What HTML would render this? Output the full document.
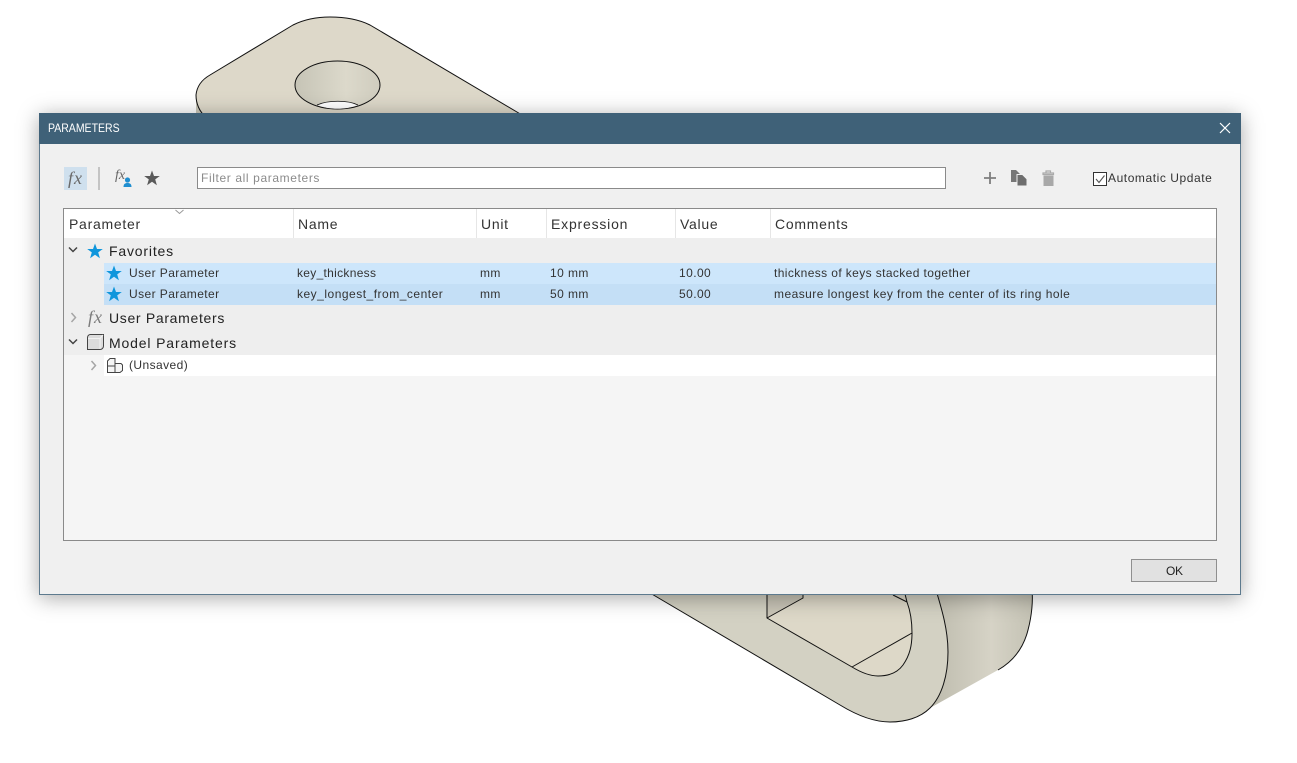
<!DOCTYPE html>
<html>
<head>
<meta charset="utf-8">
<style>
html,body{margin:0;padding:0;background:#fff;}
#p{position:relative;width:1297px;height:763px;overflow:hidden;background:#fff;font-family:"Liberation Sans",sans-serif;color:#2d2d2d;}
#bg{position:absolute;left:0;top:0;}
#d{position:absolute;left:39px;top:113px;width:1202px;height:482px;background:#f0f0f0;box-shadow:0 3px 20px rgba(0,0,0,.34),inset 0 0 0 1px #5d7a8e;}
#t{position:absolute;left:0;top:0;width:1202px;height:31px;background:#3f6178;}
.a{position:absolute;white-space:nowrap;}
.r{position:absolute;}
.c{font-size:12px;letter-spacing:.42px;line-height:14px;color:#333;}
.h{font-size:14px;letter-spacing:.72px;line-height:16px;color:#333;}
.g{font-size:14px;line-height:16px;color:#222;}
.s{position:absolute;top:209px;width:1px;height:29px;background:#e6e6e6;}
svg{position:absolute;overflow:visible;}
</style>
</head>
<body>
<div id="p">
<svg id="bg" width="1297" height="763" viewBox="0 0 1297 763">
<defs>
<linearGradient id="side" x1="930" y1="0" x2="1032" y2="0" gradientUnits="userSpaceOnUse"><stop offset="0" stop-color="#bdbbad"/><stop offset=".6" stop-color="#d6d3c6"/><stop offset="1" stop-color="#c4c2b4"/></linearGradient>
<linearGradient id="hole" x1="295" y1="0" x2="380" y2="0" gradientUnits="userSpaceOnUse"><stop offset="0" stop-color="#c6c4b6"/><stop offset=".6" stop-color="#dcd9cb"/><stop offset="1" stop-color="#cfccbe"/></linearGradient>
</defs>
<path d="M196 95V120H215V113Z" fill="#cbc8ba"/>
<g stroke="#111" stroke-width="1" stroke-linejoin="round">
<path d="M207 118C199 112 196 103 196 95C197 85 203 79 210 75L293 25C305 19 318 17 330 17C345 17 358 19 370 25L522 115L520 120H207Z" fill="#ddd8c9"/>
<ellipse cx="337.500" cy="85" rx="42.500" ry="24" fill="url(#hole)"/>
<path d="M317 105C328 100 348 100 358 105C345 110 330 110 317 105Z" fill="#fff" stroke="none"/>
<path d="M317 105C328 100 348 100 358 105" fill="none" stroke-width=".7"/>
<path d="M930 708L998 670C1012 662 1023 650 1028 630C1032 615 1033 600 1032 590H930Z" fill="url(#side)" stroke="none"/>
<path d="M998 670C1012 662 1023 650 1028 630C1032 615 1033 600 1032 590" fill="none"/>
<path d="M645 590L840 705C858 716 875 722 890 722C905 722 920 718 930 708C942 696 948 675 948 652C948 630 942 610 936 590Z" fill="#d3d1c3"/>
<path d="M767 590V618L852 667C862 673 870 676 878 676C890 676 898 672 903 665C910 655 912 645 912 633C912 620 910 610 907 602L904 590Z" fill="#ddd8c8" stroke="none"/>
<path d="M767 590V618L803 598V590Z" fill="#c9c5b7" stroke="none"/>
<path d="M767 590V618L852 667C862 673 870 676 878 676C890 676 898 672 903 665C910 655 912 645 912 633C912 620 910 610 907 602L904 590" fill="none"/>
<path d="M767 618L803 598V590M852 667L912 633M893 595L907 602" fill="none"/>
</g>
</svg>

<div id="d"><div id="t"></div></div>

<div class="a" style="left:48px;top:121px;font-size:12px;line-height:14px;color:#fff;transform:scaleX(.875);transform-origin:0 0;">PARAMETERS</div>
<svg style="left:1219px;top:122px" width="12" height="12"><path d="M1 1L11 11M11 1L1 11" stroke="#fff" stroke-width="1.2" fill="none"/></svg>

<!-- toolbar -->
<div class="r" style="left:64px;top:167px;width:23px;height:23px;background:#cfe0ee;"></div>
<div class="a" style="left:68px;top:167px;font:italic 18px/22px 'Liberation Serif',serif;letter-spacing:1px;color:#6a6a6a;">fx</div>
<div class="r" style="left:98px;top:167px;width:2px;height:23px;background:#c4c4c4;"></div>
<div class="a" style="left:115px;top:167px;font:italic 14px/18px 'Liberation Serif',serif;color:#666;">fx</div>
<svg style="left:123px;top:177px" width="10" height="10"><circle cx="4.500" cy="3" r="2.600" fill="#1f8ed0"/><path d="M.5 10C.5 7 2 6 4.500 6S8.500 7 8.500 10Z" fill="#1f8ed0"/></svg>
<svg style="left:144px;top:170px" width="16" height="16" viewBox="0 0 16 16"><path d="M8 .5L10 6H15.800L11.200 9.400L12.900 15.200L8 11.800L3.100 15.200L4.800 9.400L.2 6H6Z" fill="#5a5a5a"/></svg>
<div class="r" style="left:197px;top:167px;width:747px;height:20px;background:#fff;border:1px solid #8a8a8a;"></div>
<div class="a" style="left:201px;top:171px;font-size:12px;line-height:14px;letter-spacing:.62px;color:#8b8b8b;">Filter all parameters</div>
<svg style="left:983px;top:171px" width="14" height="14"><path d="M1 7H13M7 1V13" stroke="#7e7e7e" stroke-width="1.800" fill="none"/></svg>
<svg style="left:1010px;top:169px" width="18" height="18"><path d="M1 1H6L10 5V13H1Z" fill="#777"/><path d="M7 5.500H12.500L17 10V17H7Z" fill="#6e6e6e" stroke="#f0f0f0" stroke-width="1"/></svg>
<svg style="left:1041px;top:170px" width="14" height="16"><path d="M2 3H12.500V4.500H2ZM5 3V1H9.500V3" fill="none" stroke="#aaa" stroke-width="1.200"/><path d="M2.500 5.500H12.500V16H2.500Z" fill="#a8a8a8"/></svg>
<div class="r" style="left:1093px;top:172px;width:12px;height:12px;background:#fff;border:1px solid #333;"></div>
<svg style="left:1094px;top:173px" width="12" height="12"><path d="M2 6L5 9.500L10.500 2.500" stroke="#555" stroke-width="1.100" fill="none"/></svg>
<div class="a" style="left:1108px;top:171px;font-size:12px;line-height:14px;letter-spacing:.56px;color:#333;">Automatic Update</div>

<!-- table -->
<div class="r" style="left:63px;top:208px;width:1152px;height:331px;background:#f5f5f5;border:1px solid #8a8a8a;"></div>
<div class="r" style="left:64px;top:209px;width:1152px;height:29px;background:#fff;"></div>
<div class="s" style="left:293px"></div><div class="s" style="left:476px"></div><div class="s" style="left:546px"></div><div class="s" style="left:675px"></div><div class="s" style="left:770px"></div>
<svg style="left:175px;top:209px" width="10" height="6"><path d="M.5 1L4.500 4.500L8.500 1" stroke="#999" fill="none"/></svg>
<div class="a h" style="left:69px;top:216px">Parameter</div>
<div class="a h" style="left:298px;top:216px">Name</div>
<div class="a h" style="left:481px;top:216px">Unit</div>
<div class="a h" style="left:551px;top:216px;letter-spacing:.8px">Expression</div>
<div class="a h" style="left:680px;top:216px">Value</div>
<div class="a h" style="left:775px;top:216px">Comments</div>

<div class="r" style="left:64px;top:238px;width:1152px;height:117px;background:#eeeeee;"></div>
<div class="r" style="left:104px;top:263px;width:1112px;height:21px;background:#cde6fb;"></div>
<div class="r" style="left:104px;top:284px;width:1112px;height:21px;background:#c4dff6;"></div>
<div class="r" style="left:104px;top:355px;width:1112px;height:21px;background:#fff;"></div>

<!-- chevrons -->
<svg style="left:68px;top:246px" width="10" height="8"><path d="M1 1.500L5 5.500L9 1.500" stroke="#444" stroke-width="1.500" fill="none"/></svg>
<svg style="left:70px;top:312px" width="8" height="11"><path d="M1.500 1L5.500 5.500L1.500 10" stroke="#a5a5a5" stroke-width="1.500" fill="none"/></svg>
<svg style="left:68px;top:338px" width="10" height="8"><path d="M1 1.500L5 5.500L9 1.500" stroke="#444" stroke-width="1.500" fill="none"/></svg>
<svg style="left:90px;top:360px" width="8" height="11"><path d="M1.500 1L5.500 5.500L1.500 10" stroke="#a5a5a5" stroke-width="1.500" fill="none"/></svg>

<!-- icons -->
<svg style="left:87px;top:243px" width="16" height="16" viewBox="0 0 16 16"><path d="M8 .5L10 6H15.800L11.200 9.400L12.900 15.200L8 11.800L3.100 15.200L4.800 9.400L.2 6H6Z" fill="#0f96dc"/></svg>
<svg style="left:106px;top:265px" width="16" height="16" viewBox="0 0 16 16"><path d="M8 .5L10 6H15.800L11.200 9.400L12.900 15.200L8 11.800L3.100 15.200L4.800 9.400L.2 6H6Z" fill="#0f96dc"/></svg>
<svg style="left:106px;top:286px" width="16" height="16" viewBox="0 0 16 16"><path d="M8 .5L10 6H15.800L11.200 9.400L12.900 15.200L8 11.800L3.100 15.200L4.800 9.400L.2 6H6Z" fill="#0f96dc"/></svg>
<div class="a" style="left:88px;top:306px;font:italic 18px/22px 'Liberation Serif',serif;letter-spacing:1px;color:#7c7c7c;">fx</div>
<svg style="left:87px;top:334px" width="17" height="16"><path d="M3.500 .5H16.500V12C16.500 14 15 15.500 13 15.500H.5V3.500C.5 1.800 1.800 .5 3.500 .5Z" fill="#dcdcdc" stroke="#444"/><path d="M13 15V4.500L16 1M13 4.500H1" stroke="#f2f2f2" fill="none"/></svg>
<svg style="left:107px;top:358px" width="17" height="16"><path d="M.5 14.500V3L3 .5H8V5.500H14L15.500 7V12.500L13 14.500ZM.5 8H8V14.500M8 5.500V8" fill="#f4f4f4" stroke="#444"/></svg>

<!-- groups -->
<div class="a g" style="left:109px;top:243px;letter-spacing:.82px">Favorites</div>
<div class="a g" style="left:109px;top:310px;letter-spacing:.68px">User Parameters</div>
<div class="a g" style="left:109px;top:335px;letter-spacing:.85px">Model Parameters</div>

<!-- rows -->
<div class="a c" style="left:129px;top:266px">User Parameter</div>
<div class="a c" style="left:297px;top:266px;letter-spacing:.3px">key_thickness</div>
<div class="a c" style="left:480px;top:266px">mm</div>
<div class="a c" style="left:550px;top:266px">10 mm</div>
<div class="a c" style="left:679px;top:266px">10.00</div>
<div class="a c" style="left:774px;top:266px;letter-spacing:.39px">thickness of keys stacked together</div>

<div class="a c" style="left:129px;top:287px">User Parameter</div>
<div class="a c" style="left:297px;top:287px;letter-spacing:.5px">key_longest_from_center</div>
<div class="a c" style="left:480px;top:287px">mm</div>
<div class="a c" style="left:550px;top:287px">50 mm</div>
<div class="a c" style="left:679px;top:287px">50.00</div>
<div class="a c" style="left:774px;top:287px;letter-spacing:.45px">measure longest key from the center of its ring hole</div>

<div class="a c" style="left:129px;top:358px">(Unsaved)</div>

<!-- OK -->
<div class="r" style="left:1131px;top:559px;width:84px;height:21px;background:#e1e1e1;border:1px solid #8f8f8f;"></div>
<div class="a" style="left:1166px;top:564px;font-size:12px;line-height:14px;color:#222;letter-spacing:-.3px;">OK</div>
</div>
</body>
</html>
